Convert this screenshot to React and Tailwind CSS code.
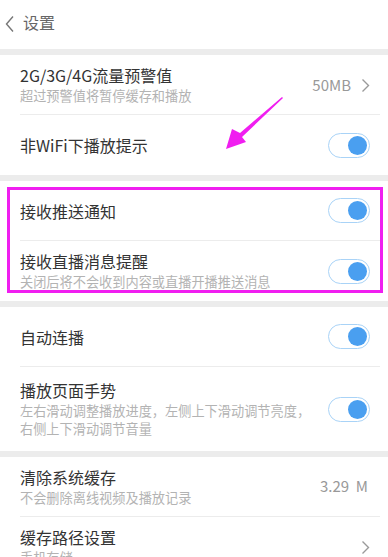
import React from "react";

const Toggle = () => (
  <div className="w-[42px] h-[25px] rounded-full border border-[#a9d3f7] bg-white flex items-center justify-end pr-[2px] shrink-0">
    <div className="w-[19px] h-[19px] rounded-full bg-[#4a9ff0]" />
  </div>
);

const Chevron = () => (
  <svg width="9" height="15" viewBox="0 0 9 15" className="shrink-0">
    <polyline points="1.5,1.5 7.5,7.5 1.5,13.5" fill="none" stroke="#9a9a9a" strokeWidth="1.4" />
  </svg>
);

const Row = ({ title, sub, right, h = "h-[60px]", divider = true }) => (
  <div className="relative">
    <div className={`flex items-center pl-5 pr-[18px] ${h}`}>
      <div className="flex-1 min-w-0 pr-[6px]">
        <div className="text-[16px] leading-[20px] text-[#333]">{title}</div>
        {sub && (
          <div className="mt-[2px] text-[13.2px] leading-[18px] text-[#b3b3b3]">{sub}</div>
        )}
      </div>
      {right}
    </div>
    {divider && <div className="ml-5 mr-[8px] h-px bg-[#ececec]" />}
  </div>
);

const Band = () => <div className="h-[6px] bg-[#ececec]" />;

export default function App() {
  return (
    <div
      className="relative w-[388px] h-[557px] overflow-hidden bg-white"
      style={{ fontFamily: '"Noto Sans CJK SC", "Noto Sans", sans-serif' }}
    >
      <div className="h-[49px] flex items-start pt-[11px] pl-[5px]">
        <svg width="10" height="18" viewBox="0 0 10 18" className="mt-[4px]">
          <polyline points="8,1.5 1.5,9 8,16.5" fill="none" stroke="#777" strokeWidth="1.4" />
        </svg>
        <span className="ml-[8px] text-[16px] leading-[22px] text-[#666]">设置</span>
      </div>
      <Band />
      <Row
        title="2G/3G/4G流量预警值"
        sub="超过预警值将暂停缓存和播放"
        h="h-[59px]"
        right={
          <div className="flex items-center gap-[10px] mt-[2px]">
            <span className="text-[15px] text-[#999]">50MB</span>
            <Chevron />
          </div>
        }
      />
      <Row title="非WiFi下播放提示" right={<Toggle />} divider={false} />
      <Band />
      <Row title="接收推送通知" right={<Toggle />} h="h-[59px]" />
      <Row
        title="接收直播消息提醒"
        sub="关闭后将不会收到内容或直播开播推送消息"
        right={<Toggle />}
        divider={false}
      />
      <Band />
      <Row title="自动连播" right={<Toggle />} h="h-[59px]" />
      <Row
        title="播放页面手势"
        sub="左右滑动调整播放进度，左侧上下滑动调节亮度，右侧上下滑动调节音量"
        right={<Toggle />}
        h="h-[84px]"
        divider={false}
      />
      <Band />
      <Row
        title="清除系统缓存"
        sub="不会删除离线视频及播放记录"
        right={<span className="text-[15px] text-[#999] mr-[2px] whitespace-pre">3.29  M</span>}
        h="h-[59px]"
      />
      <Row title="缓存路径设置" sub="手机存储" right={<Chevron />} divider={false} />

      <div className="absolute left-[7px] top-[187px] w-[376px] h-[106px] border-[3px] border-[#f01ef0] pointer-events-none" />
      <svg className="absolute left-0 top-0 pointer-events-none" width="388" height="557">
        <polygon
          points="282,97 240,133 232,129 226,149 246,142 242,137 283,98"
          fill="#f01ef0"
        />
      </svg>
    </div>
  );
}
